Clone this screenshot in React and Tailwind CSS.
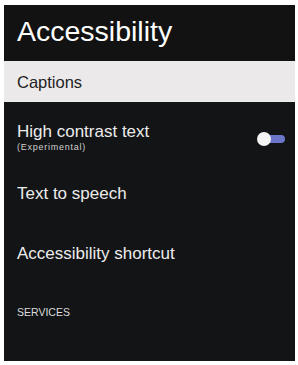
export default function App() {
  return (
    <div className="w-[298px] h-[365px] bg-white pt-[5px] pl-[4px]" style={{ fontFamily: '"Liberation Sans", Arial, sans-serif' }}>
      <div className="w-[291px] h-[356px] bg-[#131415] flex flex-col">
        <div className="h-[56px] bg-[#121212] pl-[13px] pt-[10px]">
          <span className="block text-[28.5px] leading-[32px] text-white">Accessibility</span>
        </div>
        <div className="h-[41px] bg-[#ebe9ea] flex items-center pl-[13px]">
          <span className="text-[16.5px] leading-[20px] text-[#222222]">Captions</span>
        </div>
        <div className="h-[60px] flex items-start justify-between pl-[13px] pr-[10px] pt-[20px]">
          <div className="flex flex-col">
            <span className="text-[17px] leading-[20px] text-[#ececec]">High contrast text</span>
            <span className="text-[9px] leading-[10px] tracking-[0.75px] text-[#d0d0d0]">(Experimental)</span>
          </div>
          <div className="relative w-[28px] h-[14px] mt-[10px] flex items-center">
            <div className="absolute right-0 w-[22px] h-[8px] rounded-full bg-[#6b76c9]" />
            <div className="absolute left-0 w-[14px] h-[14px] rounded-full bg-[#f4f4f4]" />
          </div>
        </div>
        <div className="h-[60px] pl-[13px] pt-[22px]">
          <span className="block text-[17px] leading-[20px] text-[#ececec]">Text to speech</span>
        </div>
        <div className="h-[60px] pl-[13px] pt-[22px]">
          <span className="block text-[17px] leading-[20px] text-[#ececec]">Accessibility shortcut</span>
        </div>
        <div className="h-[60px] pl-[13px] pt-[24px]">
          <span className="block text-[10.5px] leading-[12px] text-[#dcdcdc]">SERVICES</span>
        </div>
      </div>
    </div>
  );
}
